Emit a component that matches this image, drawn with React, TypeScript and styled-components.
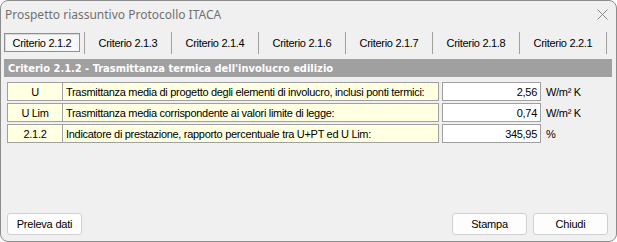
import React from "react";
import styled, { createGlobalStyle } from "styled-components";

const Global = createGlobalStyle`
  html, body { margin: 0; padding: 0; background: #ffffff; }
  * { box-sizing: border-box; }
`;

const Window = styled.div`
  width: 617px;
  height: 242px;
  border: 1px solid #8c8c8c;
  border-radius: 8px;
  background: #f0f0f0;
  overflow: hidden;
  display: flex;
  flex-direction: column;
  font-family: "Liberation Sans", Arial, sans-serif;
  color: #000;
`;

const TitleBar = styled.div`
  height: 31px;
  display: flex;
  align-items: center;
  justify-content: space-between;
  padding: 0 8px 5px 4px;
`;

const Title = styled.span`
  font-family: "Noto Sans", "Open Sans", sans-serif;
  font-size: 12px;
  color: #707070;
`;

const TabStrip = styled.div`
  display: flex;
  height: 22px;
  align-items: stretch;
`;

const Tab = styled.div<{ $w: number; $active?: boolean }>`
  width: ${(p) => p.$w}px;
  border-right: 1px solid #a0a0a0;
  display: flex;
  align-items: center;
  justify-content: center;
  padding: ${(p) => (p.$active ? "1px 4px 2px 3px" : "0")};
`;

const TabLabel = styled.span<{ $active?: boolean }>`
  font-size: 11px;
  letter-spacing: -0.3px;
  white-space: nowrap;
  ${(p) =>
    p.$active
      ? `
    flex: 1;
    height: 100%;
    display: flex;
    align-items: center;
    justify-content: center;
    border: 1px solid #8f8f8f;
    box-shadow: inset 1px 1px 0 #d9d9d9;
    background: #f7f7f7;
  `
      : ""}
`;

const Body = styled.div`
  flex: 1;
  display: flex;
  flex-direction: column;
  padding: 5px 4px 0 3px;
`;

const SectionHeader = styled.div`
  height: 18px;
  background: #a0a0a0;
  color: #ffffff;
  font-family: "DejaVu Sans Condensed", "DejaVu Sans", Tahoma, sans-serif;
  font-stretch: condensed;
  font-weight: bold;
  font-size: 11px;
  display: flex;
  align-items: center;
  padding-left: 4px;
`;

const Rows = styled.div`
  display: flex;
  flex-direction: column;
  gap: 2px;
  padding: 5px 0 0 3px;
`;

const Row = styled.div`
  display: grid;
  grid-template-columns: 56px 376px 102px auto;
  height: 19px;
  font-size: 11px;
  letter-spacing: -0.3px;
`;

const Cell = styled.div<{ $kind: "code" | "desc" | "value" }>`
  border: 1px solid #a0a0a0;
  ${(p) => (p.$kind === "desc" ? "border-left: none;" : "")}
  background: ${(p) => (p.$kind === "value" ? "#ffffff" : "#ffffe1")};
  display: flex;
  align-items: center;
  justify-content: ${(p) =>
    p.$kind === "code" ? "center" : p.$kind === "value" ? "flex-end" : "flex-start"};
  padding: ${(p) => (p.$kind === "desc" ? "0 0 0 3px" : p.$kind === "value" ? "0 3px 0 0" : "0")};
  margin-left: ${(p) => (p.$kind === "value" ? "3px" : "0")};
  white-space: nowrap;
  overflow: hidden;
`;

const Unit = styled.div`
  padding-left: 5px;
  display: flex;
  align-items: center;
  white-space: nowrap;
`;

const Footer = styled.div`
  margin-top: auto;
  display: flex;
  justify-content: space-between;
  padding: 0 4px 6px 3px;
`;

const ButtonGroup = styled.div`
  display: flex;
  gap: 6px;
`;

const Button = styled.button`
  width: 75px;
  height: 22px;
  border: 1px solid #d0d0d0;
  border-radius: 3px;
  background: #fdfdfd;
  font-family: "Liberation Sans", Arial, sans-serif;
  font-size: 11px;
  letter-spacing: -0.2px;
  color: #000;
  padding: 0;
`;

const CloseIcon = () => (
  <svg width="11" height="11" viewBox="0 0 11 11">
    <path d="M0.5 0.5 L10.5 10.5 M10.5 0.5 L0.5 10.5" stroke="#8a8a8a" strokeWidth="1" />
  </svg>
);

const tabs = [
  "Criterio 2.1.2",
  "Criterio 2.1.3",
  "Criterio 2.1.4",
  "Criterio 2.1.6",
  "Criterio 2.1.7",
  "Criterio 2.1.8",
  "Criterio 2.2.1",
];

const rows = [
  {
    code: "U",
    desc: "Trasmittanza media di progetto degli elementi di involucro, inclusi ponti termici:",
    value: "2,56",
    unit: "W/m² K",
  },
  {
    code: "U Lim",
    desc: "Trasmittanza media corrispondente ai valori limite di legge:",
    value: "0,74",
    unit: "W/m² K",
  },
  {
    code: "2.1.2",
    desc: "Indicatore di prestazione, rapporto percentuale tra U+PT ed U Lim:",
    value: "345,95",
    unit: "%",
  },
];

export default function App() {
  return (
    <>
      <Global />
      <Window>
        <TitleBar>
          <Title>Prospetto riassuntivo Protocollo ITACA</Title>
          <CloseIcon />
        </TitleBar>
        <TabStrip>
          {tabs.map((t, i) => (
            <Tab key={t} $w={i === 0 ? 84 : 87} $active={i === 0}>
              <TabLabel $active={i === 0}>{t}</TabLabel>
            </Tab>
          ))}
        </TabStrip>
        <Body>
          <SectionHeader>Criterio 2.1.2 - Trasmittanza termica dell'involucro edilizio</SectionHeader>
          <Rows>
            {rows.map((r) => (
              <Row key={r.code}>
                <Cell $kind="code">{r.code}</Cell>
                <Cell $kind="desc">{r.desc}</Cell>
                <Cell $kind="value">{r.value}</Cell>
                <Unit>{r.unit}</Unit>
              </Row>
            ))}
          </Rows>
          <Footer>
            <Button>Preleva dati</Button>
            <ButtonGroup>
              <Button>Stampa</Button>
              <Button>Chiudi</Button>
            </ButtonGroup>
          </Footer>
        </Body>
      </Window>
    </>
  );
}
